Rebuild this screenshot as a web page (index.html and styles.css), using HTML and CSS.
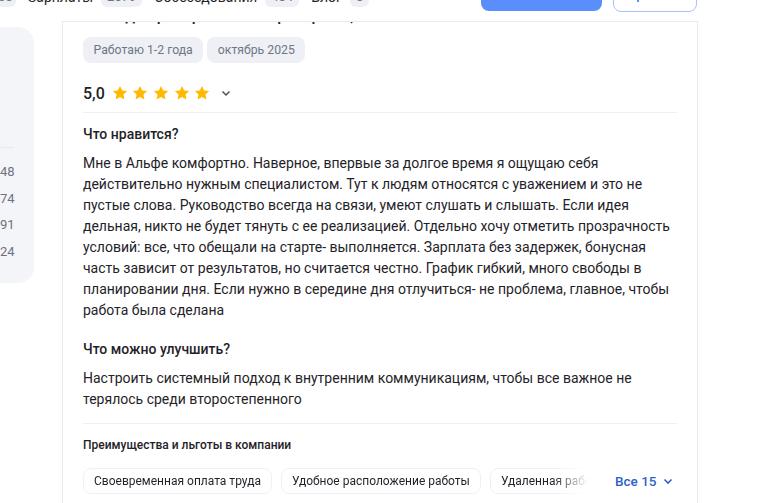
FILE: index.html
```html
<!DOCTYPE html>
<html lang="ru">
  <head>
    <meta charset="UTF-8" />
    <meta name="viewport" content="width=device-width, initial-scale=1.0" />
    <title>Отзывы сотрудников</title>
    <link rel="stylesheet" href="styles.css">
  </head>
  <body>
    <header class="topbar">
      <nav class="tabs">
        <span class="badge first">65</span>
        <span class="tab">Зарплаты</span>
        <span class="badge">2079</span>
        <span class="tab">Собеседования</span>
        <span class="badge">404</span>
        <span class="tab">Блог</span>
        <span class="badge">0</span>
      </nav>
      <div class="actions">
        <button class="btn-primary">Оставить отзыв</button>
        <button class="btn-outline"><span class="icon-mark"></span>Подписаться</button>
      </div>
    </header>

    <div class="layout">
      <aside class="sidebar">
        <div class="side-divider"></div>
        <ul class="side-stats">
          <li>48</li>
          <li>74</li>
          <li>91</li>
          <li>24</li>
        </ul>
      </aside>

      <main class="review">
        <h2 class="review-title">Менеджер по работе с партнерами, Москва</h2>
        <div class="tags">
          <span class="tag">Работаю 1-2 года</span>
          <span class="tag">октябрь 2025</span>
        </div>

        <div class="rating">
          <span class="score">5,0</span>
          <span class="stars">
            <svg viewBox="0 0 24 24"><path d="M12 2.5l2.9 6.1 6.6.8-4.9 4.6 1.3 6.5L12 17.3l-5.9 3.2 1.3-6.5L2.5 9.4l6.6-.8z"/></svg>
            <svg viewBox="0 0 24 24"><path d="M12 2.5l2.9 6.1 6.6.8-4.9 4.6 1.3 6.5L12 17.3l-5.9 3.2 1.3-6.5L2.5 9.4l6.6-.8z"/></svg>
            <svg viewBox="0 0 24 24"><path d="M12 2.5l2.9 6.1 6.6.8-4.9 4.6 1.3 6.5L12 17.3l-5.9 3.2 1.3-6.5L2.5 9.4l6.6-.8z"/></svg>
            <svg viewBox="0 0 24 24"><path d="M12 2.5l2.9 6.1 6.6.8-4.9 4.6 1.3 6.5L12 17.3l-5.9 3.2 1.3-6.5L2.5 9.4l6.6-.8z"/></svg>
            <svg viewBox="0 0 24 24"><path d="M12 2.5l2.9 6.1 6.6.8-4.9 4.6 1.3 6.5L12 17.3l-5.9 3.2 1.3-6.5L2.5 9.4l6.6-.8z"/></svg>
          </span>
          <svg class="chevron" viewBox="0 0 12 12"><path d="M2.5 4.5l3.5 3.5 3.5-3.5"/></svg>
        </div>

        <h3 class="section-title first">Что нравится?</h3>
        <p class="section-text">Мне в Альфе комфортно. Наверное, впервые за долгое время я ощущаю себя действительно нужным специалистом. Тут к людям относятся с уважением и это не пустые слова. Руководство всегда на связи, умеют слушать и слышать. Если идея дельная, никто не будет тянуть с ее реализацией. Отдельно хочу отметить прозрачность условий: все, что обещали на старте- выполняется. Зарплата без задержек, бонусная часть зависит от результатов, но считается честно. График гибкий, много свободы в планировании дня. Если нужно в середине дня отлучиться- не проблема, главное, чтобы работа была сделана</p>

        <h3 class="section-title">Что можно улучшить?</h3>
        <p class="section-text">Настроить системный подход к внутренним коммуникациям, чтобы все важное не терялось среди второстепенного</p>

        <div class="benefits">
          <h4 class="benefits-title">Преимущества и льготы в компании</h4>
          <div class="benefits-row">
            <div class="chips">
              <span class="chip">Своевременная оплата труда</span>
              <span class="chip">Удобное расположение работы</span>
              <span class="chip">Удаленная работа</span>
            </div>
            <a class="more" href="#">Все 15
              <svg viewBox="0 0 12 12"><path d="M2.5 4.5l3.5 3.5 3.5-3.5"/></svg>
            </a>
          </div>
        </div>
      </main>
    </div>
  </body>
</html>
```

FILE: styles.css
```css
* {
  padding: 0;
  margin: 0;
  box-sizing: border-box;
  list-style: none;
}
body {
  font-family: Roboto, "Noto Sans", Arial, sans-serif;
  color: #1f2329;
  background: #fff;
  overflow: hidden;
  height: 503px;
}

/* верхняя панель, перекрывает контент */
.topbar {
  position: fixed;
  top: 0;
  left: 0;
  right: 0;
  height: 22px;
  background: #fff;
  display: flex;
  justify-content: space-between;
  padding-right: 71px;
  overflow: hidden;
  z-index: 2;
}
.topbar::after {
  content: "";
  position: absolute;
  left: 62px;
  width: 636px;
  bottom: 0;
  height: 1px;
  background: #e8ebf3;
}
.tabs {
  display: flex;
  align-items: center;
  height: 20px;
  margin-top: -13px;
  font-size: 14px;
}
.tab {
  margin: 0 8px 0 12px;
  color: #1f2329;
}
.badge {
  background: #eef0f5;
  color: #6f7785;
  border-radius: 6px;
  padding: 0 6px;
  font-size: 13px;
  line-height: 20px;
}
.badge.first {
  margin-left: -8px;
  width: 24px;
}
.actions {
  display: flex;
  gap: 11px;
  align-items: flex-end;
  height: 12px;
}
.btn-primary {
  width: 121px;
  height: 40px;
  background: #5a8efc;
  border: none;
  border-radius: 8px;
  color: #fff;
  font: 500 14px Roboto, sans-serif;
  margin-bottom: 1px;
}
.btn-outline {
  width: 84px;
  height: 40px;
  background: #fff;
  border: 1px solid #a9c2fb;
  border-radius: 8px;
  color: #3a6fe8;
  font: 500 14px Roboto, sans-serif;
  position: relative;
}
.icon-mark {
  position: absolute;
  left: 23px;
  bottom: 9px;
  width: 2px;
  height: 4px;
  background: #5a8efc;
}

.layout {
  display: flex;
  gap: 28px;
  align-items: flex-start;
}

/* боковая панель слева */
.sidebar {
  width: 34px;
  height: 256px;
  margin-top: 27px;
  background: #f4f5f9;
  border-radius: 0 16px 16px 0;
  padding-right: 20px;
}
.side-divider {
  margin-top: 120px;
  height: 1px;
  background: #e6e8ef;
}
.side-stats {
  padding-top: 11px;
  text-align: right;
}
.side-stats li {
  font-size: 13px;
  line-height: 26.5px;
  color: #6b7280;
}

/* карточка отзыва */
.review {
  width: 636px;
  height: 520px;
  border-left: 1px solid #e6e9f2;
  border-right: 1px solid #e6e9f2;
  padding: 0 20px;
}
.review-title {
  margin-top: 6px;
  font-size: 16px;
  font-weight: 500;
  line-height: 20px;
  white-space: nowrap;
  padding-left: 2px;
}
.tags {
  display: flex;
  gap: 4px;
  margin-top: 11px;
}
.tag {
  height: 26px;
  line-height: 26px;
  padding: 0 10.5px;
  border-radius: 8px;
  background: #eef0f5;
  color: #6f7785;
  font-size: 12.25px;
}
.rating {
  display: flex;
  align-items: center;
  height: 24px;
  margin-top: 18px;
  padding-bottom: 7px;
  border-bottom: 1px solid #eef0f4;
  box-sizing: content-box;
}
.score {
  font-size: 16px;
  font-weight: 500;
  margin-right: 6px;
}
.stars {
  display: flex;
  gap: 2.6px;
}
.stars svg {
  width: 18px;
  height: 18px;
  fill: #ffba00;
}
.chevron {
  width: 12px;
  height: 12px;
  margin-left: 9px;
  fill: none;
  stroke: #4a4f57;
  stroke-width: 1.5;
}

.section-title {
  font-size: 14px;
  font-weight: 500;
  line-height: 20px;
  margin-top: 18px;
}
.section-title.first {
  margin-top: 11px;
}
.section-text {
  font-size: 14px;
  line-height: 21px;
  margin-top: 9px;
}

.benefits {
  margin-top: 13px;
  border-top: 1px solid #eef0f4;
  padding-top: 12px;
}
.benefits-title {
  font-size: 12px;
  font-weight: 500;
  line-height: 18px;
}
.benefits-row {
  display: flex;
  align-items: center;
  margin-top: 14px;
}
.chips {
  display: flex;
  gap: 9px;
  width: 507px;
  overflow: hidden;
  -webkit-mask-image: linear-gradient(to right, #000 470px, transparent 505px);
  mask-image: linear-gradient(to right, #000 470px, transparent 505px);
}
.chip {
  flex-shrink: 0;
  height: 26px;
  line-height: 24px;
  padding: 0 10px;
  border: 1px solid #eef0f4;
  border-radius: 8px;
  font-size: 12px;
  white-space: nowrap;
}
.more {
  margin-left: 25px;
  display: flex;
  align-items: center;
  gap: 5px;
  color: #2f62c9;
  font-size: 13.5px;
  font-weight: 500;
  text-decoration: none;
}
.more svg {
  width: 12px;
  height: 12px;
  fill: none;
  stroke: #2f62c9;
  stroke-width: 1.6;
}
```
